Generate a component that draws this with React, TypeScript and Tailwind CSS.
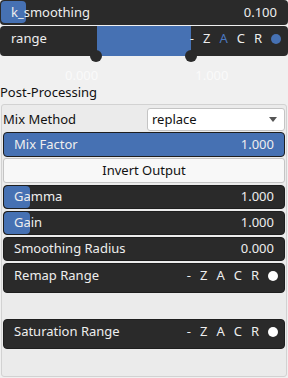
import type { ReactNode } from 'react';

const FONT = { fontFamily: '"Noto Sans", "Open Sans", sans-serif' };

function Flags({ active, dot }: { active?: string; dot: string }) {
  return (
    <div className="flex items-center gap-[9px] text-[13px] text-[#eeeeee]">
      <span>-</span>
      {['Z', 'A', 'C', 'R'].map((l) => (
        <span key={l} className={l === active ? 'text-[#4a78c0]' : ''}>
          {l}
        </span>
      ))}
      <span className={['h-[10px] w-[10px] rounded-full', dot].join(' ')} />
    </div>
  );
}

function SliderRow({
  label,
  value,
  fill,
}: {
  label: string;
  value: string;
  fill?: number;
}) {
  return (
    <div className="relative flex h-[24px] items-center justify-between overflow-hidden rounded-[4px] border border-[#1e1e1e] bg-[#2a2a2a] px-[10px] text-[13px] text-[#eeeeee]">
      {fill ? (
        <div
          className="absolute inset-y-0 left-0 rounded-[4px] bg-[#4671b3]"
          style={{ width: fill }}
        />
      ) : null}
      <span className="relative">{label}</span>
      <span className="relative">{value}</span>
    </div>
  );
}

function RangeRow({ label, children }: { label: string; children?: ReactNode }) {
  return (
    <div className="h-[30px] rounded-[4px] border border-[#1e1e1e] bg-[#2a2a2a] pl-[10px] pr-[6px] text-[13px] text-[#eeeeee]">
      <div className="flex h-[23px] items-center justify-between">
        <span>{label}</span>
        {children}
      </div>
    </div>
  );
}

export default function App() {
  return (
    <div className="h-[378px] w-[288px] bg-[#f0f0f0]" style={FONT}>
      {/* k_smoothing */}
      <div className="relative flex h-[25px] items-center justify-between rounded-[4px] bg-[#2a2a2a] pl-[11px] pr-[11px] text-[13px] text-[#eeeeee]">
        <div className="absolute left-px top-px h-[22px] w-[25px] rounded-[4px] bg-[#4671b3]" />
        <span className="relative">k_smoothing</span>
        <span className="relative">0.100</span>
      </div>

      {/* range */}
      <div className="relative mt-px h-[30px] rounded-[4px] bg-[#2a2a2a] pl-[11px] pr-[7px] text-[13px] text-[#eeeeee]">
        <div className="absolute left-[97px] top-0 h-[30px] w-[94px] bg-[#4671b3]" />
        <div className="relative flex h-[25px] items-center justify-between">
          <span>range</span>
          <Flags active="A" dot="bg-[#4671b3]" />
        </div>
        <div className="absolute left-[90px] top-[24px] h-[12px] w-[12px] rounded-full bg-[#2a2a2a]" />
        <div className="absolute left-[185px] top-[24px] h-[12px] w-[12px] rounded-full bg-[#2a2a2a]" />
      </div>

      <div className="mt-[12px] flex h-[16px] items-center text-[13px] text-[#fafafa]">
        <span className="ml-[65px]">0.000</span>
        <span className="ml-[97px]">1.000</span>
      </div>

      <div className="h-[17px] text-[13px] leading-[17px] text-[#111111]">Post-Processing</div>

      {/* panel */}
      <div className="ml-px mt-[3px] flex h-[273px] w-[286px] flex-col rounded-[3px] border border-[#d2d2d2] bg-[#ebebeb] pl-px pr-px pt-[3px]">
        <div className="flex h-[23px] items-center justify-between">
          <span className="text-[13px] text-[#111111]">Mix Method</span>
          <div className="flex h-[23px] w-[138px] items-center justify-between rounded-[3px] border border-[#c4c4c4] bg-white pl-[4px] pr-[7px] text-[13px] text-[#111111]">
            <span>replace</span>
            <svg width="8" height="5" viewBox="0 0 8 5">
              <path d="M0 0 L8 0 L4 5 Z" fill="#555555" />
            </svg>
          </div>
        </div>
        <div className="mt-[1px] flex h-[25px] items-center justify-between rounded-[4px] border border-[#1e1e1e] bg-[#4671b3] px-[10px] text-[13px] text-[#eeeeee]">
          <span>Mix Factor</span>
          <span>1.000</span>
        </div>
        <div className="mt-px flex h-[25px] items-center justify-center rounded-[3px] border border-[#c4c4c4] bg-[#f8f8f8] text-[13px] text-[#111111]">
          Invert Output
        </div>
        <div className="mt-[2px] flex flex-col gap-[2px]">
          <SliderRow label="Gamma" value="1.000" fill={26} />
          <SliderRow label="Gain" value="1.000" fill={26} />
          <SliderRow label="Smoothing Radius" value="0.000" />
          <RangeRow label="Remap Range">
            <Flags dot="bg-white" />
          </RangeRow>
        </div>
        <div className="mt-[26px]">
          <RangeRow label="Saturation Range">
            <Flags dot="bg-white" />
          </RangeRow>
        </div>
      </div>
    </div>
  );
}
